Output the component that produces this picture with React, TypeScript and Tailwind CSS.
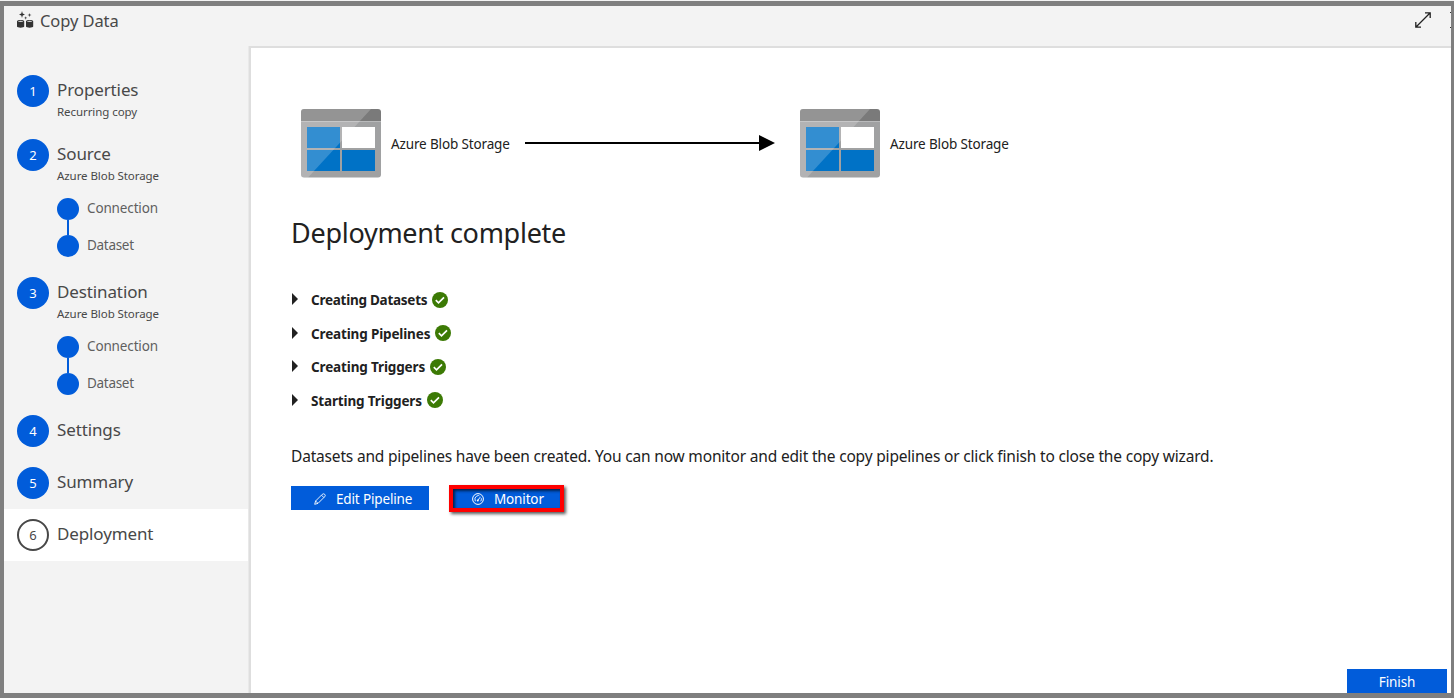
import React from "react";

function CopyDataIcon() {
  return (
    <svg width="17" height="17" viewBox="0 0 17 17" className="block shrink-0">
      <path d="M5 0l.7 2.600 2.300.9-2.300.9L5 7l-.7-2.600L2 3.500l2.300-.9zM12.500 2l.4 1.600 1.600.5-1.600.5-.4 1.600-.4-1.600-1.600-.5 1.600-.5zM8.700 5.300l.4 1.200 1.200.4-1.200.4-.4 1.400-.4-1.400L7 6.900l1.300-.4z" fill="#333" />
      <path d="M0 10.300C0 8.400 7.200 8.400 7.200 10.300V15.500C7.200 17 0 17 0 15.500ZM9 10.300C9 8.400 16.200 8.400 16.200 10.300V15.500C16.200 17 9 17 9 15.500Z" fill="#333" />
      <ellipse cx="3.600" cy="10.300" rx="2.600" ry=".6" fill="#d8d8d8" />
      <ellipse cx="12.600" cy="10.300" rx="2.600" ry=".6" fill="#d8d8d8" />
    </svg>
  );
}

function StorageIcon() {
  return (
    <svg width="80" height="69" viewBox="0 0 80 69" className="block shrink-0">
      <path d="M0 12h80v53.500a3 3 0 0 1-3 3H3a3 3 0 0 1-3-3z" fill="#a0a1a2" />
      <path d="M0 12.500V3a3 3 0 0 1 3-3h74a3 3 0 0 1 3 3v9.500z" fill="#7a7a7a" />
      <path d="M0 12.500h80" stroke="#b9babb" strokeWidth="1" />
      <path d="M6 18h33v21H6zM6 41h33v21H6zM41 41h33v21H41z" fill="#0072c6" />
      <path d="M41 18h33v21H41z" fill="#fff" />
      <path d="M3 0h67L7 68.500H3a3 3 0 0 1-3-3V3a3 3 0 0 1 3-3z" fill="#fff" fillOpacity=".2" />
    </svg>
  );
}

function Storage() {
  return (
    <div className="flex items-center gap-2.5">
      <StorageIcon />
      <span className="w-[119px] whitespace-nowrap pt-0.5 text-[13.5px] tracking-[-0.14px] text-[#212121]">Azure Blob Storage</span>
    </div>
  );
}

type StepProps = { n: number; title: string; note?: string; parts?: boolean; active?: boolean; size: string };

function Step({ n, title, note, parts, active, size }: StepProps) {
  return (
    <div className={`flex ${size} shrink-0 gap-2 pl-[13px] pt-2.5 ${active ? "bg-white" : ""}`}>
      <div className={`flex size-8 shrink-0 items-center justify-center rounded-full pt-0.5 text-[13px] ${active ? "border-2 border-[#484848] text-[#484848]" : "bg-[#015cda] text-white"}`}>
        {n}
      </div>
      <div className="flex flex-col">
        <div className="h-[17px] whitespace-nowrap pt-1 text-[17px] leading-[22px] tracking-[-0.12px] text-[#484848]">{title}</div>
        {note && <div className="mt-[11px] h-[18px] whitespace-nowrap text-[11.5px] leading-[18px] tracking-[-0.07px] text-[#484848]">{note}</div>}
        {parts && (
          <div className="mt-[13px] flex flex-col">
            <div className="flex h-[22px] items-center gap-2">
              <div className="size-[22px] rounded-full bg-[#015cda]" />
              <span className="pb-0.5 text-[13.5px] tracking-[-0.14px] text-[#5f5f5f]">Connection</span>
            </div>
            <div className="ml-2.5 h-[15px] w-0.5 bg-[#015cda]" />
            <div className="flex h-[22px] items-center gap-2">
              <div className="size-[22px] rounded-full bg-[#015cda]" />
              <span className="pb-0.5 text-[13.5px] tracking-[-0.3px] text-[#5f5f5f]">Dataset</span>
            </div>
          </div>
        )}
      </div>
    </div>
  );
}

function Task({ label, tracking }: { label: string; tracking: string }) {
  return (
    <div className="flex h-[33.5px] items-center">
      <svg width="7" height="12" viewBox="0 0 7 12" className="mb-px shrink-0"><path d="M1 0L7 6L1 12z" fill="#212121" /></svg>
      <span className={`ml-[13px] whitespace-nowrap pt-[1.5px] text-[13.5px] font-bold text-[#212121] ${tracking}`}>{label}</span>
      <svg width="16" height="16" viewBox="0 0 16 16" className="ml-[5px] shrink-0">
        <circle cx="8" cy="8" r="8" fill="#3c7a05" />
        <path d="M3.800 8.200l2.700 2.600 5.500-5.500" fill="none" stroke="#fff" strokeWidth="1.700" />
      </svg>
    </div>
  );
}

export default function App() {
  return (
    <div className="h-[698px] w-[1454px] overflow-hidden bg-[#f3f3f3] pt-px font-['Noto_Sans','Open_Sans',sans-serif]">
      <div className="flex h-[697px] flex-col border-b-[5px] border-l-4 border-r-[3px] border-t-[5px] border-[#7f7f7f] bg-[#f3f3f3]">
        <header className="flex h-10 shrink-0 items-start justify-between pl-[13px]">
          <div className="flex items-start gap-[6px] pt-[5px]">
            <CopyDataIcon />
            <span className="whitespace-nowrap text-[16.5px] leading-[19px] tracking-[-0.1px] text-[#484848]">Copy Data</span>
          </div>
          <div className="flex items-start pt-[6px]">
            <svg width="16" height="16" viewBox="0 0 16 16" className="mr-[19px]"><path d="M1 15L15 1M10 .8h5.200V6M.8 10v5.200H6" fill="none" stroke="#212121" strokeWidth="1.300" /></svg>
            <svg width="1" height="17" viewBox="0 0 1 17"><path d="M0 0h1v1H0zM0 15h1v1H0z" fill="#333" /></svg>
          </div>
        </header>
        <div className="flex min-h-0 grow">
          <nav className="flex w-[245px] shrink-0 flex-col border-r border-[#e9e9e9] pt-[19px]">
            <Step n={1} title="Properties" note="Recurring copy" size="h-[64px]" />
            <Step n={2} title="Source" note="Azure Blob Storage" parts size="h-[138px]" />
            <Step n={3} title="Destination" note="Azure Blob Storage" parts size="h-[138px]" />
            <Step n={4} title="Settings" size="h-[52px]" />
            <Step n={5} title="Summary" size="h-[52px]" />
            <Step n={6} title="Deployment" active size="h-[52px]" />
          </nav>
          <main className="flex grow flex-col border-l-2 border-t-2 border-[#dedede] bg-white pl-10 pt-[61px]">
            <div className="flex h-[69px] items-center pl-2.5">
              <Storage />
              <svg width="250" height="16" viewBox="0 0 250 16" className="mb-[2px] ml-[15px] mr-[25px]"><path d="M0 8h236" stroke="#000" strokeWidth="2" /><path d="M234 0l16 8-16 8z" /></svg>
              <Storage />
            </div>
            <h1 className="mt-[35px] h-10 whitespace-nowrap text-[27px] leading-10 tracking-[-0.28px] text-[#212121]">Deployment complete</h1>
            <div className="mt-[30px] flex flex-col">
              <Task label="Creating Datasets" tracking="tracking-[-0.26px]" />
              <Task label="Creating Pipelines" tracking="tracking-[-0.15px]" />
              <Task label="Creating Triggers" tracking="tracking-[-0.14px]" />
              <Task label="Starting Triggers" tracking="tracking-[-0.14px]" />
            </div>
            <p className="mt-[27px] h-6 whitespace-nowrap text-[15.5px] leading-6 tracking-[-0.18px] text-[#212121]">Datasets and pipelines have been created. You can now monitor and edit the copy pipelines or click finish to close the copy wizard.</p>
            <div className="mt-[17px] flex items-start gap-5 text-[13.5px] tracking-[-0.15px] text-white">
              <button className="mt-px flex h-6 w-[138px] items-center bg-[#015cda] pl-[23px]">
                <svg width="12" height="12" viewBox="0 0 12 12" className="mt-0.5"><path d="M.7 11.300L1.600 8 8.200 1.400Q9.500.3 10.700 1.300T10.600 3.800L4 10.400zM1.700 8.100L4 10.400M7.500 2.200L9.800 4.500" fill="none" stroke="#fff" strokeWidth=".9" /></svg>
                <span className="ml-[10px] whitespace-nowrap pt-0.5">Edit Pipeline</span>
              </button>
              <button className="flex h-[27px] w-[115px] items-center border-4 border-[#fe0000] bg-[#015cda] pl-[19px] shadow-[2px_2px_3px_rgba(0,0,0,0.65),inset_2px_2px_3px_rgba(0,0,0,0.65)]">
                <svg width="12" height="12" viewBox="0 0 12 12"><circle cx="6" cy="6" r="5.400" fill="none" stroke="#fff" /><path d="M5.800 7.300L8.500 3.800M3.300 8.300Q2 4.500 4.500 3.200T7.300 2.900M9.300 5.200q.4 1.800-.6 3.100" fill="none" stroke="#fff" strokeWidth=".9" /><circle cx="5.800" cy="7.500" r="1" fill="#fff" /></svg>
                <span className="ml-[10px] whitespace-nowrap pt-0.5">Monitor</span>
              </button>
            </div>
            <div className="mt-auto flex justify-end pr-1">
              <button className="flex h-6 w-[100px] items-center justify-center bg-[#015cda] pt-0.5 text-[13.5px] tracking-[-0.1px] text-white">Finish</button>
            </div>
          </main>
        </div>
      </div>
    </div>
  );
}
